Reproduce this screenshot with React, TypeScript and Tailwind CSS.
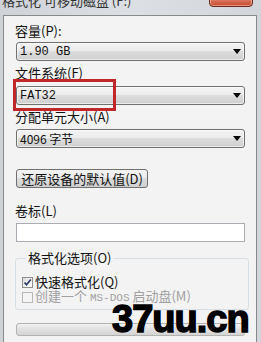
import React from "react";

const cjk = { fontFamily: '"Noto Sans CJK SC", "Liberation Sans", sans-serif' };
const mono = { fontFamily: '"Liberation Mono", "Noto Sans CJK SC", monospace' };

function Arrow() {
  return (
    <svg width="8" height="5" viewBox="0 0 8 5" className="shrink-0">
      <path d="M0 0 L8 0 L4 5 Z" fill="#000" />
    </svg>
  );
}

function Combo({ children, font }: { children: React.ReactNode; font?: React.CSSProperties }) {
  return (
    <div className="h-[19px] rounded-[3px] border border-[#707070] bg-[linear-gradient(#f3f3f3,#ebebeb_45%,#dddddd_50%,#cfcfcf)] flex items-center justify-between pl-[3px] pr-[3px] shadow-[inset_0_0_0_1px_rgba(255,255,255,0.6)]">
      <span className="text-[12px] leading-[14px] text-[#111]" style={font}>
        {children}
      </span>
      <Arrow />
    </div>
  );
}

function Label({ children }: { children: React.ReactNode }) {
  return (
    <div className="h-[14px] text-[13px] leading-[14px] text-[#111] -ml-[1px]" style={cjk}>
      {children}
    </div>
  );
}

export default function App() {
  return (
    <div className="relative w-[261px] h-[342px] overflow-hidden bg-[linear-gradient(90deg,#cfd3d8,#dcdfe3_50%,#d2d5da)]">
      {/* title bar */}
      <div className="relative h-[15px] overflow-hidden">
        <div className="pl-[2px] -mt-[6px] text-[13px] leading-[14px] text-[#333] whitespace-nowrap" style={cjk}>
          格式化 可移动磁盘 (F:)
        </div>
        <div className="absolute left-[209px] top-[-4px] w-[44px] h-[11px] rounded-b-[4px] border border-[#6b2a1c] bg-[linear-gradient(#e9a48f,#d4684f_50%,#c24a32)] shadow-[inset_0_0_0_1px_rgba(255,220,200,0.5)]" />
      </div>

      {/* panel */}
      <div className="ml-[3px] w-[254px] h-[340px] border border-[#8a8a8a] bg-[#f3f3f3] pt-[8px] pl-[12px] pr-[11px]">
        <Label>容量(P):</Label>
        <div className="mt-[4px]">
          <Combo font={mono}>1.90 GB</Combo>
        </div>

        <div className="mt-[5px]">
          <Label>文件系统(F)</Label>
        </div>
        <div className="mt-[6px]">
          <Combo font={mono}>FAT32</Combo>
        </div>

        <div className="mt-[5px]">
          <Label>分配单元大小(A)</Label>
        </div>
        <div className="mt-[5px]">
          <Combo font={cjk}>4096 字节</Combo>
        </div>

        <button className="mt-[21px] w-[132px] h-[19px] rounded-[3px] border border-[#707070] bg-[linear-gradient(#f3f3f3,#ebebeb_45%,#dddddd_50%,#cfcfcf)] flex items-center justify-center text-[13px] leading-[14px] text-[#111]" style={cjk}>
          还原设备的默认值(D)
        </button>

        <div className="mt-[16px]">
          <Label>卷标(L)</Label>
        </div>
        <div className="mt-[5px] h-[19px] border border-[#abadb3] bg-white" />

        <fieldset className="mt-[9px] -ml-[1px] -mr-[4px] border border-[#d5dfe5] rounded-[3px] pl-[6px] pb-[5px]">
          <legend className="ml-[4px] px-[2px] text-[13px] leading-[14px] text-[#111]" style={cjk}>
            格式化选项(O)
          </legend>
          <div className="mt-[10px] h-[14px] flex items-center gap-[2px]">
            <div className="w-[11px] h-[11px] border border-[#8f8f8f] bg-[linear-gradient(135deg,#dcdcdc,#ffffff)] flex items-center justify-center">
              <svg width="9" height="9" viewBox="0 0 9 9">
                <path d="M1.5 4.5 L3.5 6.8 L7.8 1.5" stroke="#2a3a6a" strokeWidth="1.6" fill="none" />
              </svg>
            </div>
            <span className="text-[13px] leading-[14px] text-[#111]" style={cjk}>快速格式化(Q)</span>
          </div>
          <div className="mt-[1px] h-[14px] flex items-center gap-[2px]">
            <div className="w-[11px] h-[11px] border border-[#b8b8b8] bg-[#f4f4f4]" />
            <span className="text-[13px] leading-[14px] text-[#a0a0a0] whitespace-nowrap" style={cjk}>
              创建一个 <span className="text-[11px]" style={mono}>MS-DOS</span> 启动盘(M)
            </span>
          </div>
        </fieldset>

        <div className="mt-[13px] h-[13px] rounded-[3px] border border-[#b2b2b2] bg-[linear-gradient(#f2f2f2,#e0e0e0_50%,#d4d4d4)]" />
      </div>

      {/* red highlight */}
      <div className="absolute left-[13px] top-[79px] w-[103px] h-[32px] border-[3px] border-[#c0262a]" />

      {/* watermark */}
      <div
        className="absolute left-[112px] top-[300px] text-[38px] leading-none font-bold text-black tracking-[-1px] [-webkit-text-stroke:1.5px_#000] [text-shadow:0_0_2px_#fff,0_0_2px_#fff]"
        style={{ fontFamily: '"Liberation Sans", Arial, sans-serif' }}
      >
        37uu.cn
      </div>
    </div>
  );
}
